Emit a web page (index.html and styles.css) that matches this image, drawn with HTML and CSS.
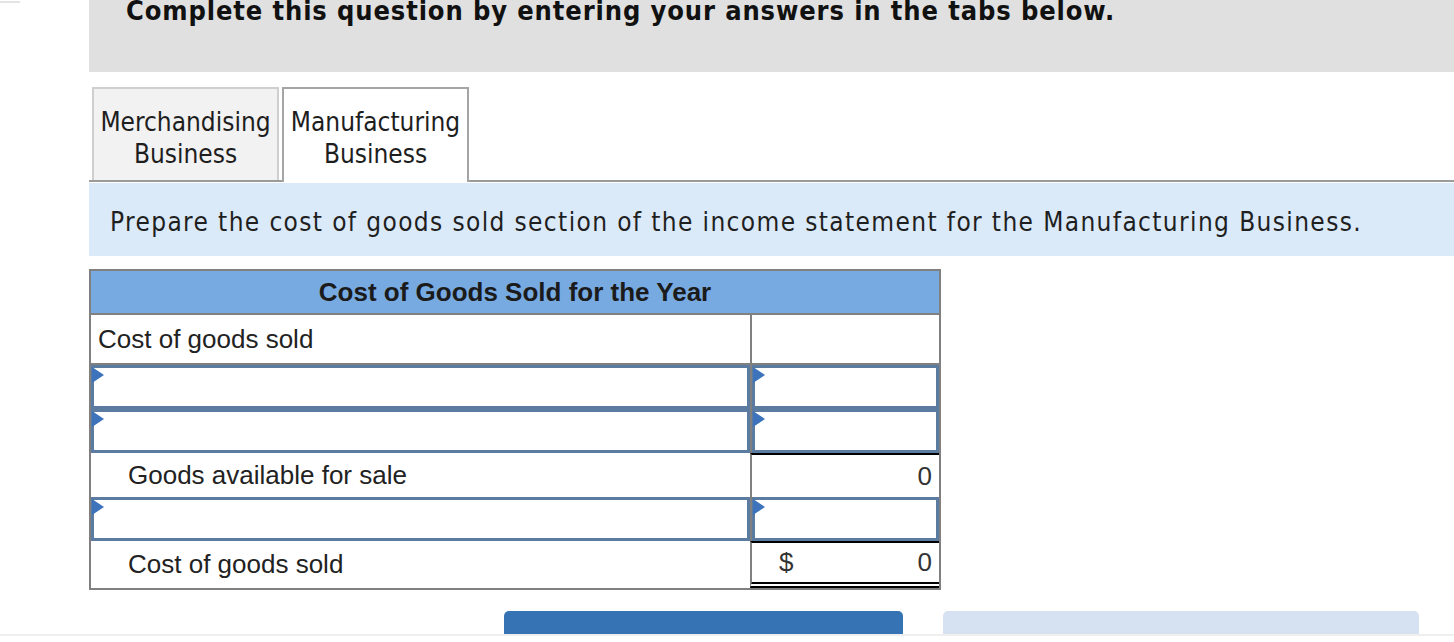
FILE: index.html
```html
<!DOCTYPE html>
<html lang="en">
<head>
<meta charset="utf-8">
<title>Cost of Goods Sold</title>
<link rel="stylesheet" href="styles.css">
</head>
<body>
<div class="top">
  <div class="corner"></div>
  <div class="banner"><p class="banner-title">Complete this question by entering your answers in the tabs below.</p></div>
</div>
<div class="content">
  <div class="tabs">
    <div class="tab">Merchandising<br>Business</div>
    <div class="tab tab-active">Manufacturing<br>Business</div>
  </div>
  <div class="instr">Prepare the cost of goods sold section of the income statement for the Manufacturing Business.</div>
  <div class="cogs">
    <div class="cogs-head">Cost of Goods Sold for the Year</div>
    <div class="row row-first">
      <div class="cell label">Cost of goods sold</div>
      <div class="cell amt"></div>
    </div>
    <div class="row row-input">
      <div class="cell"><div class="inp"></div></div>
      <div class="cell amt"><div class="inp"></div></div>
    </div>
    <div class="row row-input">
      <div class="cell"><div class="inp"></div></div>
      <div class="cell amt"><div class="inp"></div></div>
    </div>
    <div class="row row-plain">
      <div class="cell label indent">Goods available for sale</div>
      <div class="cell amt total"><span class="num">0</span></div>
    </div>
    <div class="row row-input">
      <div class="cell"><div class="inp"></div></div>
      <div class="cell amt"><div class="inp"></div></div>
    </div>
    <div class="row row-last">
      <div class="cell label indent">Cost of goods sold</div>
      <div class="cell amt total final"><span class="cur">$</span><span class="num">0</span></div>
    </div>
  </div>
  <div class="buttons">
    <div class="btn btn-primary"></div>
    <div class="btn btn-secondary"></div>
  </div>
</div>
<div class="footer-line"></div>
</body>
</html>
```
FILE: styles.css
```css
html, body {
  margin: 0;
  padding: 0;
  background: #ffffff;
}
body {
  width: 1454px;
  height: 642px;
  overflow: hidden;
  font-family: "DejaVu Sans Condensed", "DejaVu Sans", sans-serif;
  font-stretch: condensed;
  color: #1f1f1f;
}
.top {
  display: flex;
  align-items: flex-start;
}
.corner {
  width: 20px;
  height: 2px;
  margin-top: 1px;
  background: #e4e4e4;
}
.banner {
  margin-left: 69px;
  flex: 1;
  height: 72px;
  background: #e0e0e0;
  overflow: hidden;
}
.banner-title {
  margin: -4px 0 0 37px;
  font-size: 27px;
  line-height: 30px;
  font-weight: bold;
  letter-spacing: 0.88px;
  color: #111;
  white-space: nowrap;
}
.content {
  margin-left: 89px;
}
.tabs {
  display: flex;
  align-items: flex-end;
  gap: 3px;
  padding-left: 3px;
  margin-top: 15px;
  height: 93px;
  border-bottom: 2px solid #9b9b9b;
}
.tab {
  box-sizing: border-box;
  width: 187px;
  height: 93px;
  padding-top: 17px;
  background: #f2f2f2;
  border: 2px solid #cfcfcf;
  border-bottom: none;
  text-align: center;
  font-size: 26px;
  line-height: 32px;
  color: #1e1e1e;
}
.tab-active {
  height: 95px;
  margin-bottom: -2px;
  background: #ffffff;
  border-color: #a5a5a5;
}
.instr {
  box-sizing: border-box;
  margin-top: 1px;
  height: 73px;
  display: flex;
  align-items: center;
  padding: 4px 0 0 21px;
  background: #dbeaf8;
  font-size: 26px;
  letter-spacing: 1.37px;
  color: #1f1f1f;
  white-space: nowrap;
}
.cogs {
  box-sizing: border-box;
  width: 852px;
  margin-top: 13px;
  border: 2px solid #808080;
  font-family: "Liberation Sans", Arial, sans-serif;
  font-stretch: normal;
  font-size: 26px;
  color: #222;
}
.cogs-head {
  height: 42px;
  line-height: 42px;
  background: #77aae1;
  border-bottom: 2px solid #808080;
  text-align: center;
  font-weight: bold;
  color: #1b1b1b;
}
.row {
  display: grid;
  grid-template-columns: 659px 189px;
}
.row-first { height: 50px; }
.row-input { height: 44px; }
.row-plain { height: 44px; }
.row-last { height: 47px; }
.cell {
  box-sizing: border-box;
  display: flex;
  align-items: center;
}
.row-first .cell {
  border-bottom: 2px solid #808080;
}
.amt {
  border-left: 2px solid #808080;
}
.label {
  padding-left: 7px;
}
.indent {
  padding-left: 37px;
}
.inp {
  box-sizing: border-box;
  position: relative;
  width: 100%;
  height: 100%;
  border: 3px solid #5b7ca0;
  background: #fff;
}
.inp::before {
  content: "";
  position: absolute;
  left: -2px;
  top: -1px;
  width: 0;
  height: 0;
  border-left: 12px solid #3c73ba;
  border-top: 8px solid transparent;
  border-bottom: 8px solid transparent;
}
.total {
  border-top: 2px solid #000;
  padding-right: 7px;
  justify-content: flex-end;
}
.final {
  border-bottom: 6px double #000;
  padding-left: 27px;
  justify-content: space-between;
}
.num, .cur {
  color: #333;
}
.buttons {
  display: flex;
  margin-top: 21px;
  padding-left: 415px;
  gap: 40px;
  height: 23px;
}
.btn {
  height: 23px;
  border-radius: 5px 5px 0 0;
}
.btn-primary {
  width: 399px;
  background: #3673b5;
}
.btn-secondary {
  width: 476px;
  background: #d6e2f1;
}
.footer-line {
  height: 2px;
  background: #efefef;
}
```
